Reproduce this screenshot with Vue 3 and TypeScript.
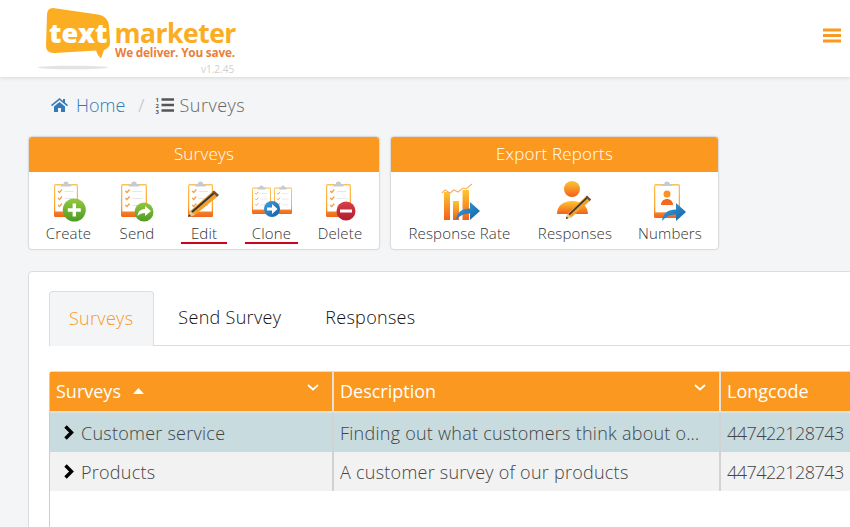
<script setup lang="ts">
interface Row { name: string; description: string; longcode: string; selected: boolean }
const rows: Row[] = [
  { name: 'Customer service', description: 'Finding out what customers think about our service and more', longcode: '447422128743', selected: true },
  { name: 'Products', description: 'A customer survey of our products', longcode: '447422128743', selected: false },
]
const tabs = ['Surveys', 'Send Survey', 'Responses']
</script>

<template>
  <div class="page">
    <svg class="sprite" aria-hidden="true">
      <defs>
        <linearGradient id="paperEdge" x1="0" y1="0" x2="0" y2="1">
          <stop offset="0" stop-color="#fdc25a" />
          <stop offset="0.65" stop-color="#fba733" />
          <stop offset="1" stop-color="#f0641e" />
        </linearGradient>
        <linearGradient id="barFill" x1="0" y1="0" x2="0" y2="1">
          <stop offset="0" stop-color="#fdc72f" />
          <stop offset="1" stop-color="#f25f1c" />
        </linearGradient>
        <linearGradient id="blueFill" x1="0" y1="0" x2="1" y2="1">
          <stop offset="0" stop-color="#3da2e4" />
          <stop offset="1" stop-color="#14609f" />
        </linearGradient>
        <linearGradient id="greenFill" x1="0" y1="0" x2="0" y2="1">
          <stop offset="0" stop-color="#93c83e" />
          <stop offset="1" stop-color="#4f9a25" />
        </linearGradient>
        <linearGradient id="redFill" x1="0" y1="0" x2="0" y2="1">
          <stop offset="0" stop-color="#d8404a" />
          <stop offset="1" stop-color="#b01c2e" />
        </linearGradient>
        <symbol id="clip" viewBox="0 0 24 36" preserveAspectRatio="none">
          <rect x="0" y="3" width="24" height="33" rx="1.5" fill="url(#paperEdge)" />
          <rect x="1.2" y="4.5" width="21.6" height="26" fill="#fff" />
          <path d="M7 5V3h2.500a2.500 2.500 0 0 1 5 0H17v2.500H7z" fill="#c9c9c9" />
          <path d="M4 10l1.500 1.500L8 8.500M4 17l1.500 1.500L8 15.500M4 24l1.500 1.500L8 22.500" fill="none" stroke="#f5a04a" stroke-width="1.200" />
          <path d="M10.500 10.500h9M10.500 17.500h9M10.500 24.500h9" stroke="#e6e6e6" stroke-width="1.100" />
        </symbol>
        <symbol id="pencil" viewBox="0 0 33 28" preserveAspectRatio="none">
          <path d="M1 27l2-6L25 2l5 5L8 25z" fill="#f2a02c" />
          <path d="M3 21l5 4-7 2z" fill="#e6c8a0" />
          <path d="M1 27l1-3 2 2z" fill="#333" />
          <path d="M5 22L27 3" stroke="#333" stroke-width="2" />
          <path d="M25 2l2-1.500 5 4.500-2 2z" fill="#7a4a20" />
        </symbol>
        <symbol id="shareArrow" viewBox="0 0 24 18" preserveAspectRatio="none">
          <path d="M0 18C1 10 6 6.500 14 6.500V0l10 9-10 9v-6.500C8 11.500 4 13.500 0 18z" fill="url(#blueFill)" />
        </symbol>
      </defs>
    </svg>

    <header class="topbar">
      <svg class="logo" viewBox="0 0 240 77" width="240" height="77">
        <ellipse cx="73" cy="67.500" rx="35" ry="1.800" fill="#e3e3e3" />
        <path d="M53 8L98 14.500Q108 16 109 26L110 42Q110 48 104 50L101 58.500Q97 55 96 50.500L55 53Q46 53.500 46 46L47 15Q47 8 53 8Z" fill="#fcae22" />
        <text x="49" y="43" class="logo-text">text</text>
        <text x="114.500" y="43" class="logo-mark">marketer</text>
        <text x="115" y="57" class="logo-tag">We deliver. You save.</text>
        <text x="201" y="73" class="logo-ver">v1.2.45</text>
      </svg>
      <svg class="burger" viewBox="0 0 18 15" width="18" height="15">
        <path d="M0 2h18M0 7.500h18M0 13h18" stroke="#fb981f" stroke-width="2.800" />
      </svg>
    </header>

    <nav class="crumbs">
      <svg class="home" viewBox="0 0 17 14" width="17" height="14">
        <path d="M8.500 0L0 7l1 1.200 7.500-6.200L16 8.200 17 7l-3-2.500V1h-2v1.900zM3 8.500V14h4V10h3v4h4V8.500L8.500 4z" fill="#337ab7" />
      </svg>
      <a class="crumb-link">Home</a>
      <span class="slash">/</span>
      <svg class="list" viewBox="0 0 19 18" width="19" height="18">
        <text x="0.500" y="5.500" class="num">1</text>
        <text x="0.500" y="11.500" class="num">2</text>
        <text x="0.500" y="17.500" class="num">3</text>
        <path d="M6.500 3.500H19M6.500 9H19M6.500 14.500H19" stroke="#555" stroke-width="2.400" />
      </svg>
      <span class="crumb-now">Surveys</span>
    </nav>

    <section class="toolbars">
      <div class="panel panel-surveys">
        <div class="panel-title">Surveys</div>
        <div class="tools tools-five">
          <div class="tool">
            <svg class="ico" viewBox="0 0 44 44">
              <use href="#clip" x="7" y="1" width="24" height="36" />
              <circle cx="27.300" cy="30" r="11.500" fill="url(#greenFill)" />
              <path d="M27.300 23.500v13M20.800 30h13" stroke="#fff" stroke-width="3.400" />
            </svg>
            <span class="tool-label">Create</span>
          </div>
          <div class="tool">
            <svg class="ico" viewBox="0 0 44 44">
              <use href="#clip" x="6" y="1" width="26" height="36" />
              <circle cx="29" cy="32" r="9.500" fill="url(#greenFill)" />
              <path d="M22.500 36C23 31 26 29 30 29v-3l6 5-6 5v-3c-3 0-5.500 1-7.500 3z" fill="#fff" />
            </svg>
            <span class="tool-label">Send</span>
          </div>
          <div class="tool">
            <svg class="ico" viewBox="0 0 44 44">
              <use href="#clip" x="6" y="1" width="25" height="36" />
              <use href="#pencil" x="5" y="10" width="33" height="28" />
            </svg>
            <span class="tool-label marked mark-edit">Edit</span>
          </div>
          <div class="tool">
            <svg class="ico" viewBox="0 0 44 44">
              <use href="#clip" x="2" y="5" width="19" height="29" />
              <use href="#clip" x="24" y="5" width="18" height="29" />
              <circle cx="22" cy="29" r="8" fill="url(#blueFill)" />
              <path d="M17 27.500h5V24l5.500 5-5.500 5v-3.500h-5z" fill="#fff" />
            </svg>
            <span class="tool-label marked mark-clone">Clone</span>
          </div>
          <div class="tool">
            <svg class="ico" viewBox="0 0 44 44">
              <use href="#clip" x="8" y="1" width="25" height="36" />
              <circle cx="28" cy="31" r="9.500" fill="url(#redFill)" />
              <path d="M22 31h12" stroke="#fff" stroke-width="3.200" />
            </svg>
            <span class="tool-label">Delete</span>
          </div>
        </div>
      </div>

      <div class="panel panel-export">
        <div class="panel-title">Export Reports</div>
        <div class="tools tools-three">
          <div class="tool">
            <svg class="ico" viewBox="0 0 44 44">
              <rect x="6" y="12" width="6" height="28" fill="url(#barFill)" />
              <rect x="15" y="21" width="6" height="19" fill="url(#barFill)" />
              <rect x="24.500" y="10" width="6.500" height="30" fill="url(#barFill)" />
              <path d="M4 13l3-3 5 3 4-3 4 2 5-4 3 1 6-5" fill="none" stroke="#f6b068" stroke-width="1.100" />
              <use href="#shareArrow" x="18" y="22" width="24" height="18" />
            </svg>
            <span class="tool-label">Response Rate</span>
          </div>
          <div class="tool">
            <svg class="ico" viewBox="0 0 44 44">
              <circle cx="19" cy="9" r="8" fill="url(#barFill)" />
              <path d="M4 34c0-8 6-13 15-13s16 5 16 13z" fill="url(#barFill)" />
              <use href="#pencil" x="12" y="15" width="27" height="25" />
            </svg>
            <span class="tool-label">Responses</span>
          </div>
          <div class="tool">
            <svg class="ico" viewBox="0 0 44 44">
              <use href="#clip" x="6" y="1" width="26" height="37" />
              <rect x="9" y="6" width="20" height="24" fill="#fff" />
              <circle cx="19" cy="14" r="3.500" fill="#f7931e" />
              <path d="M13 25c0-4 3-6 6-6s6 2 6 6z" fill="#f26a1e" />
              <use href="#shareArrow" x="14" y="23" width="24" height="18" />
            </svg>
            <span class="tool-label">Numbers</span>
          </div>
        </div>
      </div>
    </section>

    <main class="card">
      <ul class="tabs">
        <li v-for="(tab, i) in tabs" :key="tab" class="tab" :class="{ active: i === 0 }">{{ tab }}</li>
      </ul>

      <div class="grid">
        <div class="grid-head grid-row">
          <div class="cell head-cell">
            <span>Surveys</span>
            <svg class="sort" viewBox="0 0 11 6" width="11" height="6"><path d="M5.500 0L11 6H0z" fill="#fff" /></svg>
            <svg class="menu" viewBox="0 0 12 7" width="12" height="7"><path d="M1 1l5 4.500L11 1" fill="none" stroke="#fff" stroke-width="1.800" /></svg>
          </div>
          <div class="cell head-cell">
            <span>Description</span>
            <svg class="menu" viewBox="0 0 12 7" width="12" height="7"><path d="M1 1l5 4.500L11 1" fill="none" stroke="#fff" stroke-width="1.800" /></svg>
          </div>
          <div class="cell head-cell"><span>Longcode</span></div>
        </div>
        <div v-for="row in rows" :key="row.name" class="grid-row body-row" :class="{ selected: row.selected }">
          <div class="cell name-cell">
            <svg class="chev" viewBox="0 0 11 15" width="11" height="15"><path d="M2.500 1.500L8.500 7.500l-6 6" fill="none" stroke="#000" stroke-width="3.400" /></svg>
            <span>{{ row.name }}</span>
          </div>
          <div class="cell"><span class="clip-text">{{ row.description }}</span></div>
          <div class="cell code-cell">{{ row.longcode }}</div>
        </div>
      </div>
    </main>
  </div>
</template>

<style>
html, body { margin: 0; overflow: hidden; background: #f4f5f7; }
</style>

<style scoped>
.page {
  width: 850px;
  height: 527px;
  overflow: hidden;
  background: #f4f5f7;
  font-family: "Open Sans", sans-serif;
  color: #444;
}
.sprite { width: 0; height: 0; position: absolute; }
.topbar {
  height: 77px;
  background: #fff;
  box-shadow: 0 1px 4px rgba(0, 0, 0, 0.12);
  display: flex;
  align-items: flex-start;
  justify-content: space-between;
}
.logo { display: block; }
.logo-text { font: 800 27px "Open Sans", sans-serif; fill: #fff; }
.logo-mark { font: 700 26.500px "Open Sans", sans-serif; fill: #fcac20; letter-spacing: -0.5px; }
.logo-tag { font: 700 11.800px "Open Sans", sans-serif; fill: #e8803c; letter-spacing: -0.2px; }
.logo-ver { font: 400 10px "Open Sans", sans-serif; fill: #cfcfcf; }
.burger { margin: 28px 9px 0 0; }

.crumbs {
  height: 57px;
  padding: 0 0 2px 51px;
  display: flex;
  align-items: center;
  font-size: 18px;
  font-weight: 300;
  box-sizing: border-box;
}
.home { margin-right: 8px; }
.crumb-link { color: #337ab7; }
.slash { color: #bbb; margin: 0 11px 0 13px; }
.list { margin-right: 5px; }
.num { font: 700 6px "Open Sans", sans-serif; fill: #555; }
.crumb-now { color: #666; letter-spacing: 0.5px; }

.toolbars {
  margin: 2px 0 0 28px;
  display: flex;
  gap: 10px;
  align-items: flex-start;
}
.panel {
  background: #fff;
  border: 1px solid #dcdcdc;
  border-radius: 4px;
  overflow: hidden;
  box-shadow: 0 0 2px rgba(0, 0, 0, 0.08);
}
.panel-surveys { width: 350px; }
.panel-export { width: 327px; }
.panel-title {
  height: 35px;
  background: #fb981f;
  color: #fff;
  font-size: 17px;
  font-weight: 300;
  letter-spacing: 0.2px;
  line-height: 34px;
  text-align: center;
}
.tools { display: grid; height: 77px; }
.tools-five { grid-template-columns: 69px 68px 66px 69px 68px; padding-left: 5px; }
.tools-three { grid-template-columns: 137px 94px 96px; }
.tool {
  display: flex;
  flex-direction: column;
  align-items: center;
  padding-top: 8px;
}
.ico { width: 44px; height: 44px; display: block; }
.tool-label {
  font-size: 15px;
  font-weight: 300;
  letter-spacing: 0.15px;
  line-height: 18px;
  white-space: nowrap;
  color: #333;
}
.marked {
  height: 18px;
  border-bottom: 2px solid #d0021b;
}
.mark-edit { padding: 0 10px; }
.mark-clone { padding: 0 7px; }

.card {
  margin: 21px 0 0 28px;
  width: 900px;
  height: 300px;
  background: #fff;
  border: 1px solid #dcdcdc;
  border-radius: 4px;
  padding: 19px 0 0 20px;
  box-sizing: border-box;
}
.tabs {
  list-style: none;
  margin: 0;
  padding: 0;
  display: flex;
  height: 54px;
  border-bottom: 1px solid #ddd;
}
.tab {
  height: 54px;
  line-height: 53px;
  padding: 0 21px;
  font-size: 18px;
  font-weight: 300;
  letter-spacing: 0.3px;
  color: #111;
  box-sizing: border-box;
  margin-right: 2px;
}
.tab.active {
  color: #fb981f;
  background: #f4f5f7;
  border: 1px solid #ddd;
  border-bottom: 0;
  border-radius: 4px 4px 0 0;
  height: 55px;
  padding: 0 20px 0 19px;
  margin-right: 3px;
}
.grid {
  margin-top: 25px;
  border-left: 1px solid #ccc;
  border-top: 1px solid #ddd;
  border-radius: 4px 0 0 0;
  min-height: 300px;
}
.grid-row {
  display: grid;
  grid-template-columns: 284px 387px 200px;
  height: 39px;
}
.grid-head {
  background: #fb981f;
  color: #fff;
  margin-bottom: 2px;
  box-shadow: 0 2px 0 #e0e0e0;
}
.cell {
  display: flex;
  align-items: center;
  padding: 0 6px;
  font-size: 18px;
  font-weight: 300;
  letter-spacing: 0.25px;
  border-right: 2px solid #d2d2d2;
  box-sizing: border-box;
  min-width: 0;
  position: relative;
  white-space: nowrap;
}
.head-cell { font-weight: 400; letter-spacing: 0; border-right-color: #e6e0d6; padding-bottom: 2px; }
.sort { margin-left: 12px; }
.menu { position: absolute; right: 13px; top: 12px; }
.body-row { background: #f2f2f2; }
.body-row.selected { background: #c8dbdf; }
.name-cell { padding-left: 13px; }
.chev { margin-right: 7px; flex: none; }
.clip-text { overflow: hidden; text-overflow: ellipsis; white-space: nowrap; padding-right: 6px; }
.code-cell { letter-spacing: -0.55px; }
</style>
